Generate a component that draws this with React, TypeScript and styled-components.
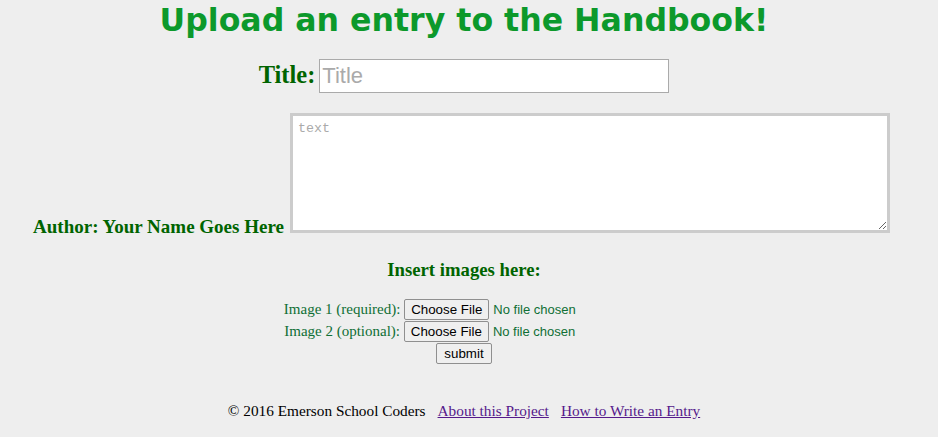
import * as React from 'react';
import styled, { createGlobalStyle } from 'styled-components';

const GlobalStyle = createGlobalStyle`
  html, body {
    margin: 0;
    background: #eeeeee;
  }
  body {
    font-family: 'Liberation Serif', 'Times New Roman', serif;
    font-size: 16px;
  }
`;

const Page = styled.div`
  padding: 2px 18px 0 8px;
  text-align: center;
`;
const Heading = styled.h1`
  margin: 0;
  font-family: 'DejaVu Sans', Verdana, sans-serif;
  font-size: 31.6px;
  line-height: 37px;
  font-weight: bold;
  color: #0c992b;
`;
const Row = styled.div<{ $gap: number; $shift?: number }>`
  margin-top: ${({ $gap }) => $gap}px;
  padding-right: ${({ $shift = 0 }) => $shift}px;
`;
const BigLabel = styled.label`
  font-size: 24.5px;
  font-weight: bold;
  color: #006400;
`;
const Label = styled.label`
  font-size: 19px;
  font-weight: bold;
  color: #006400;
  margin-right: 2px;
`;
const TitleInput = styled.input`
  box-sizing: border-box;
  width: 350px;
  height: 34px;
  margin: 0;
  padding: 0 2px;
  border: 1px solid #aaaaaa;
  background: #fff;
  font-family: 'Liberation Sans', Arial, sans-serif;
  font-size: 22px;
  &::placeholder {
    color: #aaaaaa;
  }
`;
const TextBox = styled.textarea`
  box-sizing: border-box;
  width: 600px;
  height: 120px;
  margin: 0;
  padding: 5px;
  border: 3px solid #cccccc;
  background: #fff;
  font-family: 'Liberation Mono', 'Courier New', monospace;
  font-size: 13.33px;
  &::placeholder {
    color: #aaaaaa;
  }
`;
const SubHeading = styled.h3`
  margin: 0;
  font-size: 18.72px;
  font-weight: bold;
  color: #006400;
`;
const Images = styled.div`
  margin-top: 17px;
  font-size: 15px;
  line-height: 22px;
  color: #0f6f35;
`;
const FileInput = styled.input`
  box-sizing: border-box;
  width: 240px;
  text-align: left;
  font-family: 'Liberation Sans', Arial, sans-serif;
  font-size: 13px;
  color: #0f6f35;
  &::file-selector-button {
    box-sizing: border-box;
    height: 21px;
    font-family: 'Liberation Sans', Arial, sans-serif;
    font-size: 13.33px;
    background: #efefef;
    border: 1px solid #8f8f8f;
    border-radius: 2px;
    padding: 0 6px;
    margin-right: 4px;
    color: #000;
  }
`;
const SubmitButton = styled.button`
  box-sizing: border-box;
  height: 21px;
  font-family: 'Liberation Sans', Arial, sans-serif;
  font-size: 13.33px;
  background: #efefef;
  border: 1px solid #8f8f8f;
  border-radius: 2px;
  padding: 0 7px;
  color: #000;
`;
const Footer = styled.div`
  margin-top: 38px;
  font-size: 15.3px;
  color: #000;
`;
const FooterLink = styled.a`
  margin-left: 12px;
  color: #551a8b;
  text-decoration: underline;
`;

export default function App() {
  return (
    <Page>
      <GlobalStyle />
      <Heading>Upload an entry to the Handbook!</Heading>
      <Row $gap={20}>
        <BigLabel>Title:</BigLabel> <TitleInput type='text' placeholder='Title' />
      </Row>
      <Row $gap={20} $shift={5}>
        <Label>Author: Your Name Goes Here</Label> <TextBox placeholder='text' />
      </Row>
      <Row $gap={21}>
        <SubHeading>Insert images here:</SubHeading>
      </Row>
      <Images>
        Image 1 (required): <FileInput type='file' /><br />
        Image 2 (optional): <FileInput type='file' /><br />
        <SubmitButton type='submit'>submit</SubmitButton>
      </Images>
      <Footer>
        &copy; 2016 Emerson School Coders
        <FooterLink href='#about'>About this Project</FooterLink>
        <FooterLink href='#howto'>How to Write an Entry</FooterLink>
      </Footer>
    </Page>
  );
}
